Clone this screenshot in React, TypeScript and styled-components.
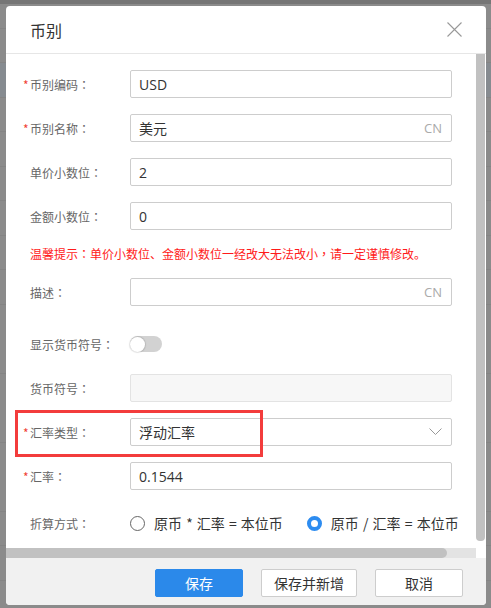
import styled, { createGlobalStyle } from "styled-components";

const GlobalStyle = createGlobalStyle`
  html, body {
    margin: 0;
    height: 100%;
  }
  body {
    background-color: #8b8b8b;
    background-image:
      linear-gradient(#767676 0 4px, transparent 4px),
      linear-gradient(transparent 63px, #868b90 63px 97px, transparent 97px),
      repeating-linear-gradient(
        to bottom,
        transparent 0 28px,
        #848484 28px 29px,
        transparent 29px 34.5px
      );
    font-family: "Open Sans", "Noto Sans CJK SC", sans-serif;
  }
`;

const Page = styled.div`
  padding: 6px 6px 0 6px;
`;

const Modal = styled.div`
  width: 480px;
  height: 599px;
  background: #fff;
  border-radius: 4px;
  overflow: hidden;
  display: flex;
  flex-direction: column;
`;

const Header = styled.div`
  height: 47px;
  flex: none;
  display: flex;
  align-items: center;
  justify-content: space-between;
  padding: 0 24px;
  border-bottom: 1px solid #e6e6e6;
`;

const Title = styled.span`
  font-family: "Noto Sans CJK SC", sans-serif;
  font-size: 16px;
  color: #333;
`;

const CloseIcon = styled.svg`
  width: 15px;
  height: 15px;
  display: block;
`;

// scroll area: content + drawn scrollbars (headless browser hides native ones)
const Body = styled.div`
  flex: none;
  display: grid;
  grid-template-columns: 470px 9px;
  grid-template-rows: 494px 10px;
`;

const Viewport = styled.div`
  overflow: hidden;
`;

const VTrack = styled.div`
  background: #fff;
`;

const VThumb = styled.div`
  height: 487px;
  border-radius: 0 0 4px 4px;
  background: #c1c1c1;
`;

const HTrack = styled.div`
  background: #e3e3e3;
`;

const HThumb = styled.div`
  width: 441px;
  height: 10px;
  border-radius: 0 5px 5px 0;
  background: #c1c1c1;
`;

const Corner = styled.div`
  background: #fff;
`;

const Form = styled.div`
  width: 501px;
  box-sizing: border-box;
  padding: 16px 0 18px;
`;

const Row = styled.div<{ $top?: number }>`
  position: relative;
  display: grid;
  grid-template-columns: 124px 322px;
  align-items: center;
  height: 28px;
  margin-top: ${(p) => p.$top ?? 16}px;

  &:first-child {
    margin-top: 0;
  }
`;

const Label = styled.label`
  padding-left: 24px;
  font-family: "Noto Sans CJK SC", sans-serif;
  font-size: 12px;
  color: #666;
  white-space: nowrap;
`;

const Star = styled.span`
  display: inline-block;
  width: 7px;
  margin-left: -7px;
  color: #f04134;
  font-size: 12px;
`;

// full-width punctuation drawn centred, as in the reference
const Punct = styled.span`
  font-family: "Noto Sans CJK TC", sans-serif;
`;

const Field = styled.div<{ $disabled?: boolean }>`
  box-sizing: border-box;
  height: 28px;
  display: flex;
  align-items: center;
  justify-content: space-between;
  padding: 0 9px 0 8px;
  border: 1px solid ${(p) => (p.$disabled ? "#e3e3e3" : "#cdcdcd")};
  border-radius: 2px;
  background: ${(p) => (p.$disabled ? "#f7f7f7" : "#fff")};
  font-size: 14px;
  color: #333;
`;

const Suffix = styled.span`
  font-size: 13px;
  color: #aaa;
`;

const Warning = styled.div`
  margin-top: 16px;
  padding-left: 24px;
  height: 16px;
  line-height: 16px;
  font-family: "Noto Sans CJK SC", sans-serif;
  font-size: 12px;
  color: #ff1a1a;
  white-space: nowrap;
`;

const Toggle = styled.div`
  width: 32px;
  height: 16px;
  border-radius: 8px;
  background: #d2d2d2;
  display: flex;
  align-items: center;

  &::before {
    content: "";
    width: 15px;
    height: 15px;
    border-radius: 50%;
    background: #fff;
    box-shadow: 0 0 1px 1px rgba(0, 0, 0, 0.12);
  }
`;

const Highlight = styled.div`
  position: absolute;
  left: 9px;
  top: -8px;
  width: 248px;
  height: 47px;
  box-sizing: border-box;
  border: 3px solid #f33c3c;
  pointer-events: none;
`;

const RadioGroup = styled.div`
  display: flex;
  align-items: center;
  gap: 24px;
  white-space: nowrap;
`;

const RadioItem = styled.span`
  display: inline-flex;
  align-items: center;
  gap: 9px;
  font-family: "Noto Sans CJK SC", sans-serif;
  font-size: 14px;
  word-spacing: 1px;
  color: #333;
`;

const RadioDot = styled.span<{ $checked?: boolean }>`
  box-sizing: border-box;
  width: 15px;
  height: 15px;
  border-radius: 50%;
  background: #fff;
  border: ${(p) => (p.$checked ? "4px solid #2d8cf0" : "1px solid #666")};
`;

const Footer = styled.div`
  height: 47px;
  flex: none;
  box-sizing: border-box;
  background: #f1f1f1;
  display: flex;
  justify-content: flex-end;
  gap: 18px;
  padding: 11px 23px 0 0;
`;

const Button = styled.button<{ $primary?: boolean; $width: number }>`
  width: ${(p) => p.$width}px;
  height: 28px;
  border-radius: 2px;
  border: 1px solid ${(p) => (p.$primary ? "#2b89ea" : "#cdcdcd")};
  background: ${(p) => (p.$primary ? "#2b89ea" : "#fff")};
  color: ${(p) => (p.$primary ? "#fff" : "#333")};
  font-family: "Noto Sans CJK SC", sans-serif;
  font-size: 14px;
  padding: 0;
  cursor: pointer;
`;

const Chevron = () => (
  <svg width="13" height="8" viewBox="0 0 13 8">
    <polyline points="0.5,0.5 6.5,6.5 12.5,0.5" fill="none" stroke="#999" strokeWidth="1" />
  </svg>
);

const FieldLabel = ({ text, required }: { text: string; required?: boolean }) => (
  <Label>
    {required && <Star>*</Star>}
    {text}
    <Punct>：</Punct>
  </Label>
);

const App = () => {
  return (
    <>
      <GlobalStyle />
      <Page>
        <Modal>
          <Header>
            <Title>币别</Title>
            <CloseIcon viewBox="0 0 15 15">
              <path d="M0.5 0.5L14.5 14.5M14.5 0.5L0.5 14.5" stroke="#999" strokeWidth="1.1" />
            </CloseIcon>
          </Header>
          <Body>
            <Viewport>
              <Form>
                <Row>
                  <FieldLabel text="币别编码" required />
                  <Field>USD</Field>
                </Row>
                <Row>
                  <FieldLabel text="币别名称" required />
                  <Field>
                    美元<Suffix>CN</Suffix>
                  </Field>
                </Row>
                <Row>
                  <FieldLabel text="单价小数位" />
                  <Field>2</Field>
                </Row>
                <Row>
                  <FieldLabel text="金额小数位" />
                  <Field>0</Field>
                </Row>
                <Warning>
                  温馨提示<Punct>：</Punct>单价小数位、金额小数位一经改大无法改小
                  <Punct>，</Punct>请一定谨慎修改。
                </Warning>
                <Row>
                  <FieldLabel text="描述" />
                  <Field>
                    <span />
                    <Suffix>CN</Suffix>
                  </Field>
                </Row>
                <Row $top={24}>
                  <FieldLabel text="显示货币符号" />
                  <Toggle />
                </Row>
                <Row>
                  <FieldLabel text="货币符号" />
                  <Field $disabled />
                </Row>
                <Row>
                  <FieldLabel text="汇率类型" required />
                  <Field>
                    浮动汇率
                    <Chevron />
                  </Field>
                  <Highlight />
                </Row>
                <Row>
                  <FieldLabel text="汇率" required />
                  <Field>0.1544</Field>
                </Row>
                <Row $top={19}>
                  <FieldLabel text="折算方式" />
                  <RadioGroup>
                    <RadioItem>
                      <RadioDot />
                      原币 * 汇率 = 本位币
                    </RadioItem>
                    <RadioItem>
                      <RadioDot $checked />
                      原币 / 汇率 = 本位币
                    </RadioItem>
                  </RadioGroup>
                </Row>
              </Form>
            </Viewport>
            <VTrack>
              <VThumb />
            </VTrack>
            <HTrack>
              <HThumb />
            </HTrack>
            <Corner />
          </Body>
          <Footer>
            <Button $primary $width={88}>保存</Button>
            <Button $width={96}>保存并新增</Button>
            <Button $width={88}>取消</Button>
          </Footer>
        </Modal>
      </Page>
    </>
  );
};

export default App;
